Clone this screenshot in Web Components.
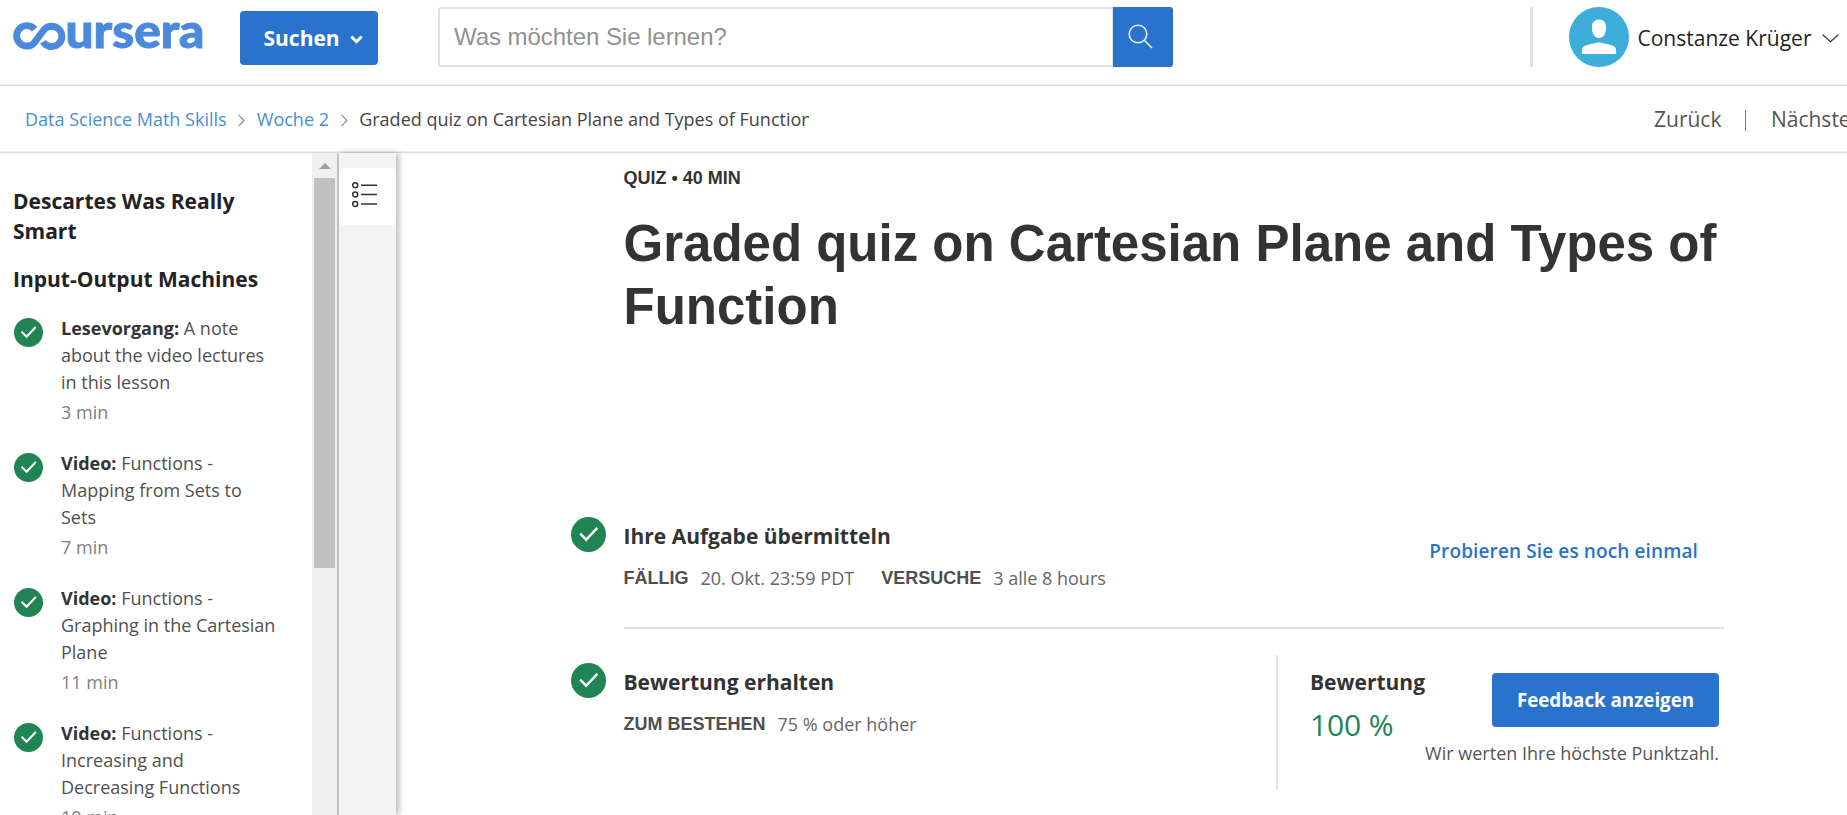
<!DOCTYPE html>
<html lang="de">
<head>
<meta charset="utf-8">
<title>Graded quiz on Cartesian Plane and Types of Function</title>
<style>
html, body { margin: 0; height: 100%; overflow: hidden; background: #fff; }
body { font-family: "Open Sans", "Noto Sans", sans-serif; color: #333; }
</style>
</head>
<body>
<course-page></course-page>

<script>
function define(name, html) {
  const tpl = document.createElement('template');
  tpl.innerHTML = html;
  customElements.define(name, class extends HTMLElement {
    constructor() {
      super();
      this.attachShadow({ mode: 'open' }).append(tpl.content.cloneNode(true));
    }
  });
}

define('check-badge', `
<style>
:host { display: block; width: var(--size, 29px); height: var(--size, 29px); flex: none; }
svg { display: block; width: 100%; height: 100%; }
</style>
<svg viewBox="0 0 29 29"><circle cx="14.5" cy="14.5" r="14.5" fill="#208455"/><path d="M7.600 13.800l5 5 9.200-9.800" fill="none" stroke="#fff" stroke-width="2"/></svg>`);

define('brand-logo', `
<style>
:host { display: block; width: 194px; height: 34px; flex: none; }
svg { display: block; overflow: visible; }
text { font: 900 47px Lato, sans-serif; }
</style>
<svg width="194" height="34" viewBox="12 19 194 34" role="img" aria-label="coursera">
  <path d="M34.600 29.200A10.200 10.200 0 1 0 34.600 42.400L43.600 30.200A10.200 10.200 0 1 1 43 41.800" fill="none" stroke="#4b89dc" stroke-width="6.900"/>
  <text x="65.500" y="48.300" fill="#4b89dc" stroke="#4b89dc" stroke-width=".9" textLength="139" lengthAdjust="spacingAndGlyphs">ursera</text>
</svg>`);

define('search-field', `
<style>
:host { display: flex; width: 735px; height: 60px; }
.box { flex: 1; box-sizing: border-box; border: 2px solid #e0e0e0; border-right-width: 1px; border-radius: 3px 0 0 3px; padding: 1px 0 0 14px; font: 24px/54px "Liberation Sans", Arial, sans-serif; letter-spacing: -.05px; color: #919191; }
.go { width: 60px; background: #2a73cc; border-radius: 0 3px 3px 0; display: flex; align-items: center; padding: 0 0 1px 15px; box-sizing: border-box; }
</style>
<div class="box"><slot></slot></div>
<div class="go"><svg width="25" height="25" viewBox="0 0 25 25" fill="none" stroke="#e6eefa" stroke-width="1.600"><circle cx="10" cy="10" r="8.800"/><path d="M16.300 16.300L24 24"/></svg></div>`);

define('user-menu', `
<style>
:host { display: flex; align-items: center; height: 60px; }
.name { font-size: 21px; line-height: 30px; color: #1f1f1f; margin: 1px 11px 0 8.5px; white-space: nowrap; }
svg { display: block; flex: none; }
</style>
<svg width="60" height="60" viewBox="0 0 60 60"><circle cx="30" cy="30" r="30" fill="#3daedb"/><path d="M30 12.500c4.600 0 7.200 2.800 7 8.500-.2 6-2.800 10-7 10s-6.800-4-7-10c-.2-5.700 2.400-8.500 7-8.500z" fill="#fff"/><path d="M12.800 47c0-3.500.3-5.600 1.200-7 .7-1 2-1.500 4.500-2.100C23 36.800 27 36 30 35.300c3 .7 7 1.500 11.500 2.600 2.500.6 3.800 1.100 4.500 2.100.9 1.400 1.200 3.500 1.200 7z" fill="#fff"/></svg>
<span class="name"><slot></slot></span>
<svg width="17" height="9" viewBox="0 0 17 9" style="margin-top:3px"><path d="M.7.7l7.800 7 7.800-7" fill="none" stroke="#333" stroke-width="1.200"/></svg>`);

define('site-header', `
<style>
:host { display: flex; box-sizing: border-box; height: 86px; border-bottom: 1px solid #dcdcdc; box-shadow: inset 0 -1px #efefef; padding: 7px 0 0 12px; align-items: flex-start; }
brand-logo { margin-top: 12px; }
.explore { margin: 4px 60px 0 34px; width: 138px; height: 54px; box-sizing: border-box; padding-left: 23.5px; border-radius: 4px; background: #2a73cc; color: #fff; font: 700 21px/54px "Open Sans", sans-serif; display: flex; align-items: center; gap: 10px; }
.explore svg { margin-top: 2px; }
.rule { width: 3px; height: 60px; background: #e0e0e0; margin-left: 357px; }
user-menu { margin-left: 36px; }
</style>
<brand-logo></brand-logo>
<div class="explore">Suchen<svg width="13" height="9" viewBox="0 0 13 9"><path d="M1.300 1.500l5.200 5.200 5.200-5.200" fill="none" stroke="#fff" stroke-width="3"/></svg></div>
<search-field>Was möchten Sie lernen?</search-field>
<div class="rule"></div>
<user-menu>Constanze Krüger</user-menu>`);

define('crumb-bar', `
<style>
:host { display: flex; box-sizing: border-box; height: 67px; border-bottom: 1px solid #dcdcdc; box-shadow: inset 0 -1px #efefef; padding-left: 25px; align-items: center; font-size: 18px; line-height: 27px; white-space: nowrap; overflow: hidden; }
a { color: #4590d3; margin-top: 1px; flex: none; }
.here { width: 450px; overflow: hidden; color: #444; margin-top: 1px; flex: none; }
.sep { flex: none; margin: 3px 11.500px 0 11.700px; }
nav { display: flex; align-items: center; margin-left: auto; font-size: 21px; line-height: 30px; color: #555; width: 193px; flex: none; }
nav i { width: 1px; height: 21px; background: #777; margin: 2px 24.500px 0 24px; flex: none; }
</style>
<a>Data Science Math Skills</a>
<svg class="sep" width="7" height="13" viewBox="0 0 7 13"><path d="M.6.8l5.400 5.700L.6 12.200" fill="none" stroke="#888" stroke-width="1.100"/></svg>
<a>Woche 2</a>
<svg class="sep" width="7" height="13" viewBox="0 0 7 13"><path d="M.6.8l5.400 5.700L.6 12.200" fill="none" stroke="#888" stroke-width="1.100"/></svg>
<span class="here">Graded quiz on Cartesian Plane and Types of Function</span>
<nav><span>Zurück</span><i></i><span>Nächste</span></nav>`);

define('lesson-item', `
<style>
:host { display: flex; gap: 18.500px; margin-bottom: 24px; font-size: 18px; line-height: 27px; color: #505050; }
check-badge { margin-top: 2.500px; }
b { color: #333; font-weight: 700; }
.time { color: #808080; margin-top: 3px; }
.text { width: 220px; }
</style>
<check-badge></check-badge>
<div class="text"><div><b><slot name="kind"></slot></b> <slot></slot></div><div class="time"><slot name="time"></slot></div></div>`);

define('lesson-sidebar', `
<style>
:host { display: flex; width: 339px; box-sizing: border-box; border-right: 2px solid #c8c8c8; overflow: hidden; flex: none; }
.list { width: 312px; box-sizing: border-box; padding: 33px 0 0 13.500px; }
h3 { margin: 0 0 18px -.5px; width: 245px; font: 700 21px/30px "Open Sans", sans-serif; color: #222; }
h3 + h3 { width: 260px; margin-bottom: 21px; }
.track { width: 25px; background: #f0f0f0; display: flex; flex-direction: column; align-items: center; }
.up { height: 25px; box-sizing: border-box; padding-top: 10px; }
.up svg { display: block; }
.thumb { width: 21px; height: 390px; background: #c1c1c1; }
</style>
<div class="list">
  <h3>Descartes Was Really Smart</h3>
  <h3>Input-Output Machines</h3>
  <lesson-item><span slot="kind">Lesevorgang:</span>A note about the video lectures in this lesson<span slot="time">3 min</span></lesson-item>
  <lesson-item><span slot="kind">Video:</span>Functions - Mapping from Sets to Sets<span slot="time">7 min</span></lesson-item>
  <lesson-item><span slot="kind">Video:</span>Functions - Graphing in the Cartesian Plane<span slot="time">11 min</span></lesson-item>
  <lesson-item><span slot="kind">Video:</span>Functions - Increasing and Decreasing Functions<span slot="time">10 min</span></lesson-item>
</div>
<div class="track"><div class="up"><svg width="12" height="6" viewBox="0 0 12 6"><path d="M0 6L6 0l6 6z" fill="#a0a0a0"/></svg></div><div class="thumb"></div></div>`);

define('tool-rail', `
<style>
:host { display: block; width: 57px; background: #f3f3f3; box-shadow: 3px 0 6px rgba(0,0,0,.27); flex: none; padding-top: 15px; box-sizing: border-box; }
.tab { height: 57px; background: #fff; border-radius: 4px; padding: 14px 0 0 13px; box-sizing: border-box; }
svg { display: block; }
</style>
<div class="tab"><svg width="26" height="26" viewBox="0 0 26 26" fill="none" stroke="#333" stroke-width="1.500"><circle cx="3.200" cy="3.300" r="2.500"/><circle cx="3.200" cy="12.600" r="2.500"/><circle cx="3.200" cy="22" r="2.500"/><path d="M9 3.300h16M9 12.600h16M9 22h16"/></svg></div>`);

define('task-step', `
<style>
:host { display: flex; }
check-badge { --size: 35px; margin: -4px 18px 0 -.5px; }
h2 { margin: 0; font: 700 21px/30px "Open Sans", sans-serif; color: #333; }
.meta { display: flex; margin-top: 14px; font-size: 18px; line-height: 27px; color: #666; white-space: nowrap; }
::slotted(b) { font: 700 18px/27px "Liberation Sans", Arial, sans-serif; color: #4f4f4f; margin-right: 12px; }
::slotted(span) { margin-right: 27px; }
</style>
<check-badge></check-badge>
<div><h2><slot name="title"></slot></h2><div class="meta"><slot></slot></div></div>`);

define('grade-panel', `
<style>
:host { display: flex; width: 448px; height: 135px; box-sizing: border-box; border-left: 2px solid #e1e1e1; padding: 0 5px 0 32px; justify-content: space-between; }
.score { width: 115px; flex: none; padding-top: 12px; }
h2 { margin: 0; font: 700 21px/30px "Open Sans", sans-serif; color: #333; }
.pct { font-size: 30px; line-height: 42px; margin-top: 7px; color: #208455; white-space: nowrap; letter-spacing: -.1px; }
.act { display: flex; flex-direction: column; align-items: flex-end; padding-top: 18px; width: 294px; flex: none; }
button { width: 227px; height: 54px; border: 0; border-radius: 4px; padding: 0; background: #2a73cc; color: #fff; font: 700 18.750px/54px "Open Sans", sans-serif; }
.note { margin-top: 13px; font-size: 18px; line-height: 27px; color: #555; white-space: nowrap; }
</style>
<div class="score"><h2>Bewertung</h2><div class="pct">100 %</div></div>
<div class="act"><button>Feedback anzeigen</button><div class="note">Wir werten Ihre höchste Punktzahl.</div></div>`);

define('quiz-view', `
<style>
:host { display: block; padding: 13px 123px 0 175px; flex: 1; min-width: 0; }
.intro { margin-left: 52.500px; height: 351px; }
.kicker { font: 700 18px/24px "Liberation Sans", Arial, sans-serif; color: #333; }
h1 { margin: 22px 0 0; font: 700 51px/63px "Liberation Sans", Arial, sans-serif; color: #333; }
.row { display: flex; justify-content: space-between; align-items: flex-start; }
.first { height: 110px; padding-top: 4px; box-sizing: border-box; }
.retry { font-size: 19px; font-weight: 600; line-height: 27px; letter-spacing: .12px; color: #2a73cc; margin: 17px 26px 0 0; }
hr { margin: 0 0 26px 53px; border: 0; height: 2px; background: #e1e1e1; }
.second task-step { margin-top: 12px; }
</style>
<div class="intro"><div class="kicker">QUIZ • 40 MIN</div><h1>Graded quiz on Cartesian Plane and Types of Function</h1></div>
<div class="row first">
  <task-step><span slot="title">Ihre Aufgabe übermitteln</span><b>FÄLLIG</b><span>20. Okt. 23:59 PDT</span><b>VERSUCHE</b><span>3 alle 8 hours</span></task-step>
  <a class="retry">Probieren Sie es noch einmal</a>
</div>
<hr>
<div class="row second">
  <task-step><span slot="title">Bewertung erhalten</span><b>ZUM BESTEHEN</b><span>75 % oder höher</span></task-step>
  <grade-panel></grade-panel>
</div>`);

define('course-page', `
<style>
:host { display: flex; flex-direction: column; height: 100vh; overflow: hidden; }
main { display: flex; flex: 1; min-height: 0; }
</style>
<site-header></site-header>
<crumb-bar></crumb-bar>
<main><lesson-sidebar></lesson-sidebar><tool-rail></tool-rail><quiz-view></quiz-view></main>`);
</script>
</body>
</html>
